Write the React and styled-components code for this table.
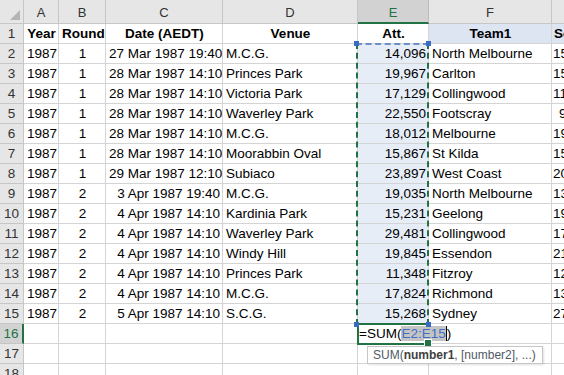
import React from 'react';
import styled, { createGlobalStyle } from 'styled-components';

const Global = createGlobalStyle`
  html, body { margin: 0; padding: 0; background: #fff; overflow: hidden; }
  body { font-family: "Liberation Sans", Arial, sans-serif; }
`;

const COLS = [24, 35, 47, 117, 135, 71, 123, 82];
const GREEN = '#217346';
const BLUE = '#3a6bc2';

const Sheet = styled.div`
  position: relative;
  display: grid;
  grid-template-columns: ${COLS.map((c) => c + 'px').join(' ')};
  grid-template-rows: 24px;
  grid-auto-rows: 20px;
  width: 564px;
  height: 375px;
  overflow: hidden;
  font-size: 13.5px;
  color: #000;
`;

const Corner = styled.div`
  position: relative;
  box-sizing: border-box;
  background: #e6e6e6;
  border-right: 1px solid #c6c6c6;
  border-bottom: 1px solid #c6c6c6;
  svg { position: absolute; right: 3px; bottom: 3px; }
`;

const ColHeader = styled.div`
  box-sizing: border-box;
  background: ${(p) => (p.$active ? '#d2d2d2' : '#e6e6e6')};
  color: ${(p) => (p.$active ? GREEN : '#333')};
  border-right: 1px solid ${(p) => (p.$active ? '#bdbdbd' : '#c6c6c6')};
  border-bottom: ${(p) => (p.$active ? `2px solid ${GREEN}` : '1px solid #c6c6c6')};
  font-size: 13px;
  text-align: center;
  line-height: 21px;
  padding-top: 2px;
`;

const RowHeader = styled.div`
  box-sizing: border-box;
  background: ${(p) => (p.$active ? '#d2d2d2' : '#e6e6e6')};
  color: ${(p) => (p.$active ? GREEN : '#333')};
  border-right: ${(p) => (p.$active ? `2px solid ${GREEN}` : '1px solid #c6c6c6')};
  border-bottom: 1px solid #c6c6c6;
  font-size: 13.5px;
  text-align: center;
  line-height: 18px;
  padding-top: 1px;
`;

const Cell = styled.div`
  box-sizing: border-box;
  border-right: 1px solid #d4d4d4;
  border-bottom: 1px solid #d4d4d4;
  padding: 1px 2px 0 ${(p) => (p.$pad != null ? p.$pad : 3)}px;
  line-height: 18px;
  white-space: nowrap;
  overflow: hidden;
  text-align: ${(p) => p.$align || 'left'};
  font-weight: ${(p) => (p.$bold ? 700 : 400)};
  background: ${(p) => p.$bg || '#fff'};
`;

const EditCell = styled(Cell)`
  position: relative;
  overflow: visible;
  z-index: 2;
  padding-left: 1px;
`;

const EditFrame = styled.div`
  position: absolute;
  left: -1px;
  top: -1px;
  width: 72px;
  height: 22px;
  box-sizing: border-box;
  border: 2px solid ${GREEN};
  border-right: none;
  pointer-events: none;
`;

const FillHandle = styled.div`
  position: absolute;
  right: -3px;
  bottom: -4px;
  width: 6px;
  height: 6px;
  background: ${GREEN};
  border: 1px solid #fff;
`;

const Formula = styled.span`
  position: relative;
  display: inline-block;
  background: #fff;
  padding-right: 4px;
`;

const RefText = styled.span`
  color: #3f6fc4;
  background: #c4c4c4;
`;

const Caret = styled.span`
  display: inline-block;
  width: 1px;
  height: 15px;
  background: #000;
  vertical-align: -3px;
`;

const Tooltip = styled.div`
  position: absolute;
  left: 9px;
  top: 22px;
  height: 18px;
  box-sizing: border-box;
  border: 1px solid #c6c6c6;
  background: #fff;
  box-shadow: 1px 1px 2px rgba(0, 0, 0, 0.12);
  padding: 0 6px 0 5px;
  font-size: 12px;
  line-height: 16px;
  color: #505a66;
  white-space: nowrap;
  b { font-weight: 700; color: #404040; }
`;

const Selection = styled.div`
  position: absolute;
  left: 356px;
  top: 43px;
  width: 73px;
  height: 282px;
  box-sizing: border-box;
  border: 2px dashed ${GREEN};
  border-top-color: #6d8fc8;
  z-index: 4;
  pointer-events: none;
`;

const Handle = styled.div`
  position: absolute;
  width: 5px;
  height: 5px;
  background: ${BLUE};
  ${(p) => (p.$top ? 'top: -4px;' : 'bottom: -4px;')}
  ${(p) => (p.$left ? 'left: -4px;' : 'right: -4px;')}
`;

const letters = ['A', 'B', 'C', 'D', 'E', 'F', 'G'];
const aligns = ['right', 'center', 'right', 'left', 'right', 'left', 'left'];
const HEAD_BG = '#dde4f2';

const header = ['Year', 'Round', 'Date (AEDT)', 'Venue', 'Att.', 'Team1', 'Score Team1'];

const rows = [
  ['1987', '1', '27 Mar 1987 19:40', 'M.C.G.', '14,096', 'North Melbourne', '15.16 (106)'],
  ['1987', '1', '28 Mar 1987 14:10', 'Princes Park', '19,967', 'Carlton', '15.12 (102)'],
  ['1987', '1', '28 Mar 1987 14:10', 'Victoria Park', '17,129', 'Collingwood', '11.15 (81)'],
  ['1987', '1', '28 Mar 1987 14:10', 'Waverley Park', '22,550', 'Footscray', '9.10 (64)'],
  ['1987', '1', '28 Mar 1987 14:10', 'M.C.G.', '18,012', 'Melbourne', '19.13 (127)'],
  ['1987', '1', '28 Mar 1987 14:10', 'Moorabbin Oval', '15,867', 'St Kilda', '15.15 (105)'],
  ['1987', '1', '29 Mar 1987 12:10', 'Subiaco', '23,897', 'West Coast', '20.15 (135)'],
  ['1987', '2', '3 Apr 1987 19:40', 'M.C.G.', '19,035', 'North Melbourne', '13.10 (88)'],
  ['1987', '2', '4 Apr 1987 14:10', 'Kardinia Park', '15,231', 'Geelong', '19.11 (125)'],
  ['1987', '2', '4 Apr 1987 14:10', 'Waverley Park', '29,481', 'Collingwood', '17.14 (116)'],
  ['1987', '2', '4 Apr 1987 14:10', 'Windy Hill', '19,845', 'Essendon', '21.17 (143)'],
  ['1987', '2', '4 Apr 1987 14:10', 'Princes Park', '11,348', 'Fitzroy', '12.15 (87)'],
  ['1987', '2', '4 Apr 1987 14:10', 'M.C.G.', '17,824', 'Richmond', '13.11 (89)'],
  ['1987', '2', '5 Apr 1987 14:10', 'S.C.G.', '15,268', 'Sydney', '27.9 (171)'],
];

export default function App() {
  const cells = [];
  cells.push(
    <Corner key="corner">
      <svg width="10" height="10" viewBox="0 0 10 10">
        <polygon points="10,0 10,10 0,10" fill="#b4b4b4" />
      </svg>
    </Corner>
  );
  letters.forEach((l) => cells.push(<ColHeader key={'h' + l} $active={l === 'E'}>{l}</ColHeader>));

  cells.push(<RowHeader key="r1">1</RowHeader>);
  header.forEach((h, i) => (
    cells.push(
      <Cell
        key={'c1' + i}
        $align={i === 6 ? 'left' : 'center'}
        $pad={i === 6 ? 2 : undefined}
        $bold
        $bg={i >= 5 ? HEAD_BG : undefined}
      >
        {h}
      </Cell>
    )
  ));

  rows.forEach((r, ri) => {
    const n = ri + 2;
    cells.push(<RowHeader key={'r' + n}>{n}</RowHeader>);
    r.forEach((v, ci) => cells.push(
      <Cell
        key={'c' + n + ci}
        $align={aligns[ci]}
        $pad={ci === 6 ? (v.length < 10 ? 7 : 1) : undefined}
        $bg={ci === 4 ? '#e7edf7' : undefined}
      >
        {v}
      </Cell>
    ));
  });

  [16, 17, 18].forEach((n) => {
    cells.push(<RowHeader key={'r' + n} $active={n === 16}>{n}</RowHeader>);
    letters.forEach((l, ci) => {
      if (n === 16 && l === 'E') {
        cells.push(
          <EditCell key={'c' + n + ci}>
            <Formula>=SUM(<RefText>E2:E15</RefText><Caret />)</Formula>
            <EditFrame><FillHandle /></EditFrame>
            <Tooltip>SUM(<b>number1</b>, [number2], ...)</Tooltip>
          </EditCell>
        );
      } else {
        cells.push(<Cell key={'c' + n + ci} />);
      }
    });
  });

  return (
    <>
      <Global />
      <Sheet>
        {cells}
        <Selection>
          <Handle $top $left />
          <Handle $top />
          <Handle $left />
          <Handle />
        </Selection>
      </Sheet>
    </>
  );
}
